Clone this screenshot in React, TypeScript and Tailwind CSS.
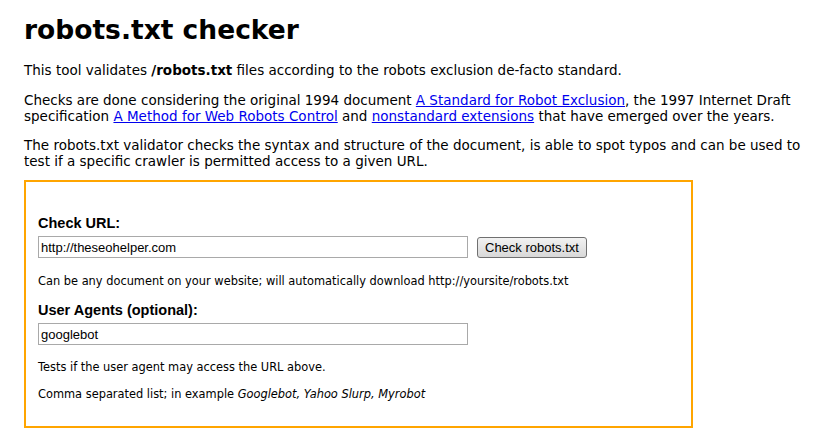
export default function App() {
  return (
    <div className="min-h-screen bg-white pl-[24px] pr-[12px] pt-[14px] text-[13.5px] leading-[16px] text-black [font-family:'DejaVu_Sans',Verdana,sans-serif]">
      <h1 className="text-[26.5px] leading-[32px] font-bold">robots.txt checker</h1>

      <p className="mt-[16px]">
        This tool validates <b>/robots.txt</b> files according to the robots exclusion de-facto standard.
      </p>
      <p className="mt-[14px]">
        Checks are done considering the original 1994 document{' '}
        <a href="#" className="text-[#0000ee] underline">A Standard for Robot Exclusion</a>, the 1997 Internet Draft
        <br />
        specification{' '}
        <a href="#" className="text-[#0000ee] underline">A Method for Web Robots Control</a> and{' '}
        <a href="#" className="text-[#0000ee] underline">nonstandard extensions</a> that have emerged over the years.
      </p>
      <p className="mt-[13px]">
        The robots.txt validator checks the syntax and structure of the document, is able to spot typos and can be used to
        <br />
        test if a specific crawler is permitted access to a given URL.
      </p>

      <form className="mt-[11px] w-[669px] border-2 border-[#ffa500] px-[12px] pt-[32px] pb-[24px]">
        <label className="block text-[14.5px] leading-[18px] font-bold [font-family:'Liberation_Sans',Arial,sans-serif]">
          Check URL:
        </label>
        <div className="mt-[4px] flex items-center gap-[9px]">
          <input
            type="text"
            defaultValue="http://theseohelper.com"
            className="h-[22px] w-[430px] border border-[#a9a9a9] px-[2px] text-[13px] outline-none [font-family:'Liberation_Sans',Arial,sans-serif]"
          />
          <button
            type="button"
            className="h-[21px] rounded-[3px] border border-[#707070] bg-gradient-to-b from-[#f2f2f2] to-[#d8d8d8] px-[7px] text-[13px] leading-[17px] [font-family:'Liberation_Sans',Arial,sans-serif]"
          >
            Check robots.txt
          </button>
        </div>
        <p className="mt-[16px] text-[11.4px] leading-[15px]">
          Can be any document on your website; will automatically download http://yoursite/robots.txt
        </p>

        <label className="mt-[12px] block text-[14.5px] leading-[18px] font-bold [font-family:'Liberation_Sans',Arial,sans-serif]">
          User Agents (optional):
        </label>
        <div className="mt-[4px]">
          <input
            type="text"
            defaultValue="googlebot"
            className="h-[22px] w-[430px] border border-[#a9a9a9] px-[2px] text-[13px] outline-none [font-family:'Liberation_Sans',Arial,sans-serif]"
          />
        </div>
        <p className="mt-[15px] text-[11.4px] leading-[15px]">Tests if the user agent may access the URL above.</p>
        <p className="mt-[12px] text-[11.4px] leading-[15px]">
          Comma separated list; in example <i>Googlebot, Yahoo Slurp, Myrobot</i>
        </p>
      </form>
    </div>
  );
}
